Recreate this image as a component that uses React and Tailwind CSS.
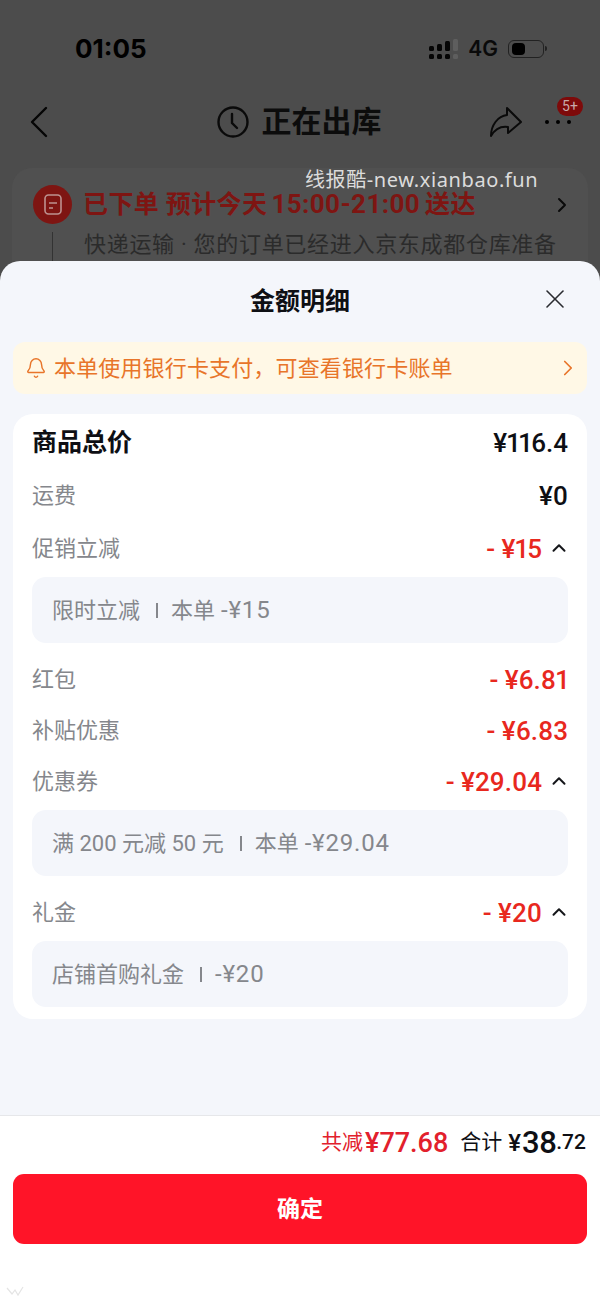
import { ChevronRight, ChevronUp, X, Bell } from 'lucide-react'

function Row({ label, value, discount, open, bold, className }) {
  return (
    <div className={`h-[30px] pt-[2px] flex items-center justify-between ${className}`}>
      <span className={bold ? 'text-[25px] leading-[30px] font-bold text-[#0e0f14]' : 'text-[22px] leading-[30px] text-[#85878c]'}>
        {label}
      </span>
      <span className="flex items-center">
        <span className={`text-[26px] leading-[30px] font-medium proportional-nums ${discount ? 'text-[#e8281e]' : 'text-[#0e0f14]'}`}>
          {value}
        </span>
        {open && <ChevronUp size={22} strokeWidth={2.2} className="ml-[6px] -mr-[2px] mb-[3px] text-[#15161a]" />}
      </span>
    </div>
  )
}

function Detail({ children }) {
  return (
    <div className="h-[66px] mt-[14px] rounded-[14px] bg-[#f4f6fb] px-5 flex items-center text-[22px] text-[#85878c]">
      {children}
    </div>
  )
}

function Bar() {
  return <span className="ml-[16px] mr-[13px] w-[2px] h-[15px] bg-[#85878c]" />
}

// amounts in the detail boxes run a little wider than the text around them
function Amount({ className, children }) {
  return <span className={`text-[24px] tracking-[0.8px] ${className}`}>{children}</span>
}

function Backdrop() {
  return (
    <div className="h-[261px] shrink-0 overflow-hidden bg-[#4c4c4c] relative">
      {/* status bar */}
      <div className="flex items-center justify-between pt-[33px] pl-[75px] pr-[53px] h-[64px]">
        <span className="text-[26px] leading-[30px] font-bold text-black font-['Inter',sans-serif]">01:05</span>
        <div className="flex items-center">
          <svg width="30" height="20" viewBox="0 0 30 20" fill="#050505">
            <rect x="0" y="7" width="5" height="5" rx="1.5" />
            <rect x="8" y="5" width="5" height="7" rx="1.5" />
            <rect x="16" y="2" width="5" height="10" rx="1.5" />
            <rect x="24" y="0" width="5" height="12" rx="1.5" fill="#5e5e5e" />
            <rect x="0" y="15" width="5" height="5" rx="1.5" />
            <rect x="8" y="15" width="5" height="5" rx="1.5" />
            <rect x="16" y="15" width="5" height="5" rx="1.5" />
            <rect x="24" y="15" width="5" height="5" rx="1.5" fill="#5e5e5e" />
          </svg>
          <span className="ml-[9px] text-[21px] leading-[24px] font-semibold text-[#0a0a0a] font-['Inter',sans-serif]">4G</span>
          <div className="ml-[10px] w-[36px] h-[18px] rounded-[6px] border border-[#222] py-[2px] px-[3px]">
            <div className="w-[13px] h-full rounded-[4px] bg-black" />
          </div>
          <div className="w-[2px] h-[5px] ml-px rounded-r bg-[#222]" />
        </div>
      </div>

      {/* nav */}
      <div className="relative flex items-center justify-center mt-[35px] h-[46px] pr-[2px]">
        <svg width="20" height="32" viewBox="0 0 20 32" fill="none" stroke="#050505" strokeWidth="2.4" strokeLinecap="round" strokeLinejoin="round" className="absolute left-[29px] top-[7px]">
          <path d="M17 2 3 16l14 14" />
        </svg>
        <svg width="32" height="32" viewBox="0 0 32 32" fill="none" stroke="#0a0a0a" strokeWidth="2.4" className="mr-[13px]">
          <circle cx="16" cy="16" r="14.5" />
          <path d="M15 8v9l5 5" strokeLinecap="round" />
        </svg>
        <span className="text-[30px] leading-[40px] font-bold text-[#0c0c0c]">正在出库</span>
        <svg width="32" height="30" viewBox="0 0 32 30" fill="none" stroke="#0a0a0a" strokeWidth="2" strokeLinejoin="round" className="absolute left-[490px] top-[8px]">
          <path d="M17 1 31 15 18 26V20C11 19 5 22 1 29 1 18 8 9 17 8Z" />
        </svg>
        <div className="absolute left-[545px] top-[21px] flex gap-[7px]">
          <span className="w-[4px] h-[4px] rounded-full bg-black" />
          <span className="w-[4px] h-[4px] rounded-full bg-black" />
          <span className="w-[4px] h-[4px] rounded-full bg-black" />
        </div>
        <span className="absolute left-[557px] top-[-2px] w-[26px] h-[19px] rounded-full bg-[#7e0a0a] text-[14px] leading-[19px] text-center text-[#c9a9a9]">5+</span>
      </div>

      {/* order card, cut off by the sheet */}
      <div className="mt-[23px] mx-[12px] h-[120px] rounded-t-[20px] bg-[#505050] pt-[17px] pl-[21px] pr-[20px]">
        <div className="flex items-center">
          <div className="w-[39px] h-[39px] rounded-full bg-[#7e1512] flex items-center justify-center shrink-0">
            <svg width="18" height="21" viewBox="0 0 18 21" fill="none" stroke="#bd9290" strokeWidth="1.6">
              <rect x="1" y="1" width="16" height="19" rx="3.5" />
              <path d="M5 9h8M5 14h4" />
            </svg>
          </div>
          <span className="ml-[11px] text-[25px] leading-[32px] font-bold tracking-[0.4px] whitespace-nowrap text-[#7e1512]">
            已下单 预计今天<span className="ml-[4px] mr-[5px] text-[26px]">15:00-21:00</span>送达
          </span>
          <ChevronRight size={24} strokeWidth={2} className="ml-auto -mr-[6px] text-[#0a0a0a]" />
        </div>
        <div className="flex">
          <div className="ml-[19px] mt-[8px] w-px h-[40px] bg-[#333]" />
          <span className="ml-[31px] mt-[6px] text-[22px] leading-[30px] tracking-[0.7px] whitespace-nowrap text-[#2b2b2b]">快递运输 · 您的订单已经进入京东成都仓库准备</span>
        </div>
      </div>

      <span className="absolute left-[305px] top-[167px] text-[20px] leading-[26px] tracking-[0.6px] text-[#dcdcdc] font-['Noto_Sans','Noto_Sans_CJK_SC',sans-serif]">线报酷-new.xianbao.fun</span>
    </div>
  )
}

export default function App() {
  return (
    <div className="relative w-[600px] h-[1304px] flex flex-col overflow-hidden bg-[#4c4c4c] font-['Roboto','Noto_Sans_CJK_SC',sans-serif]">
      <Backdrop />

      <div className="flex-1 rounded-t-[20px] bg-[#f4f6fb] px-[13px] overflow-hidden">
        <div className="relative h-[81px] flex items-center justify-center">
          <span className="text-[25px] font-bold text-[#0e0f14]">金额明细</span>
          <X size={32} strokeWidth={1.2} className="absolute right-[16px] top-[22px] text-[#2a2b30]" />
        </div>

        <div className="h-[52px] rounded-[12px] bg-[#fff8e6] flex items-center pl-[12px] pr-[6px] text-[#e8752a]">
          <Bell size={22} strokeWidth={1.6} />
          <span className="ml-[7px] text-[22px] tracking-[0.15px]">本单使用银行卡支付，可查看银行卡账单</span>
          <ChevronRight size={26} strokeWidth={1.6} className="ml-auto" />
        </div>

        <div className="mt-5 h-[605px] rounded-[20px] bg-white px-[19px] pt-[13px]">
          <Row label="商品总价" value="¥116.4" bold />
          <Row label="运费" value="¥0" className="mt-[23px]" />
          <Row label="促销立减" value="- ¥15" discount open className="mt-[23px]" />
          <Detail>
            限时立减<Bar />本单<Amount className="ml-[6px]">-¥15</Amount>
          </Detail>
          <Row label="红包" value="- ¥6.81" discount className="mt-[21px]" />
          <Row label="补贴优惠" value="- ¥6.83" discount className="mt-[21px]" />
          <Row label="优惠券" value="- ¥29.04" discount open className="mt-[21px]" />
          <Detail>
            满 200 元减 50 元<Bar />本单<Amount className="ml-[6px]">-¥29.04</Amount>
          </Detail>
          <Row label="礼金" value="- ¥20" discount open className="mt-[21px]" />
          <Detail>
            店铺首购礼金<Bar /><Amount>-¥20</Amount>
          </Detail>
        </div>
      </div>

      <div className="h-[189px] shrink-0 bg-white border-t border-[#e6e7ea] px-[13px]">
        <div className="h-[58px] pb-[4px] pr-px flex items-center justify-end">
          <span className="text-[21px] text-[#e2202c]">共减</span>
          <span className="ml-[2px] text-[27px] font-medium text-[#e2202c]">¥77.68</span>
          <span className="ml-[12px] text-[21px] text-[#0e0f14]">合计</span>
          <span className="ml-[6px] text-[24px] font-medium text-[#0e0f14]">¥</span>
          <span className="ml-px text-[31px] font-medium tracking-[-0.5px] text-[#0e0f14]">38</span>
          <span className="text-[21px] font-medium text-[#0e0f14]">.72</span>
        </div>
        <button className="w-full h-[70px] pt-[3px] rounded-[11px] bg-[#ff1428] text-[23px] font-bold text-white">确定</button>
      </div>

      <svg width="18" height="12" viewBox="0 0 18 12" fill="none" stroke="#e4e4e4" strokeWidth="1.2" className="absolute left-[6px] top-[1285px]">
        <path d="M1 3 6 9l3-4 3 5 5-8" />
      </svg>
    </div>
  )
}
